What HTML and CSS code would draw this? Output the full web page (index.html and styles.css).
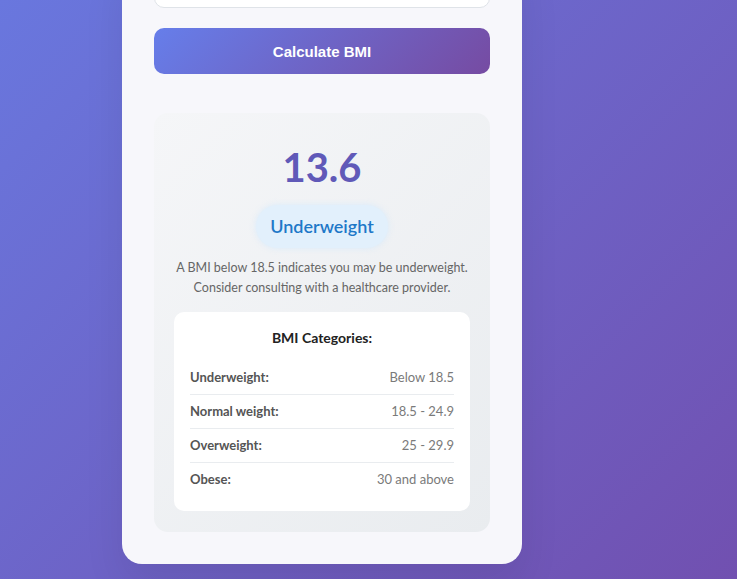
FILE: index.html
```html
<!DOCTYPE html>
<html lang="en">
<head>
<meta charset="utf-8">
<title>BMI Calculator</title>
<link rel="stylesheet" href="styles.css">
</head>
<body>
<main class="page">
  <section class="card">
    <div class="field">
      <input class="field-input" type="number" aria-label="Height (cm)">
    </div>
    <button class="calc-btn" type="button">Calculate BMI</button>

    <div class="result">
      <div class="bmi-value">13.6</div>
      <div class="bmi-badge">Underweight</div>
      <p class="bmi-note">A BMI below 18.5 indicates you may be underweight.<br>Consider consulting with a healthcare provider.</p>

      <div class="categories">
        <h4 class="categories-title">BMI Categories:</h4>
        <div class="cat-row"><span class="cat-name">Underweight:</span><span class="cat-range">Below 18.5</span></div>
        <div class="cat-row"><span class="cat-name">Normal weight:</span><span class="cat-range">18.5 - 24.9</span></div>
        <div class="cat-row"><span class="cat-name">Overweight:</span><span class="cat-range">25 - 29.9</span></div>
        <div class="cat-row"><span class="cat-name">Obese:</span><span class="cat-range">30 and above</span></div>
      </div>
    </div>
  </section>
</main>
</body>
</html>
```

FILE: styles.css
```css
* {
  box-sizing: border-box;
}

html, body {
  margin: 0;
  height: 100%;
}

body {
  background: linear-gradient(135deg, #6977de 0%, #7150b0 100%);
  font-family: Lato, "Noto Sans", sans-serif;
  overflow: hidden;
}

.page {
  padding: 0 0 16px 122px;
}

.card {
  width: 400px;
  background: #f7f7fb;
  border-radius: 0 0 20px 20px;
  padding: 0 32px 32px;
  box-shadow: 0 20px 40px rgba(0, 0, 0, 0.08);
}

.field {
  margin-top: -40px;
  margin-bottom: 20px;
}

.field-input {
  display: block;
  width: 100%;
  height: 48px;
  border: 1px solid #dfe3e8;
  border-radius: 10px;
  background: #ffffff;
}

.calc-btn {
  display: block;
  width: 100%;
  height: 46px;
  padding-top: 2px;
  border: none;
  border-radius: 10px;
  background: linear-gradient(135deg, #667eea 0%, #764ba2 100%);
  color: #ffffff;
  font-family: "Liberation Sans", Arial, sans-serif;
  font-size: 15px;
  font-weight: 700;
  cursor: pointer;
}

.result {
  margin-top: 39px;
  padding: 30px 20px 21px;
  border-radius: 14px;
  background: linear-gradient(135deg, #f5f6f8 0%, #e9ecef 100%);
  text-align: center;
}

.bmi-value {
  font-size: 40px;
  line-height: 48px;
  font-weight: 700;
  color: #6059b8;
  margin-bottom: 14px;
}

.bmi-badge {
  display: inline-block;
  padding: 8px 14px;
  border-radius: 22px;
  background: #e2f0fc;
  color: #1e78c8;
  font-size: 18px;
  line-height: 27px;
  font-weight: 600;
  box-shadow: 0 0 6px rgba(210, 232, 252, 0.8);
}

.bmi-note {
  margin: 10px -10px 14px;
  font-size: 12.5px;
  line-height: 20px;
  color: #666666;
  white-space: nowrap;
}

.categories {
  background: #ffffff;
  border-radius: 10px;
  padding: 15px 16px;
  text-align: left;
}

.categories-title {
  margin: 0 0 12px;
  text-align: center;
  font-size: 14px;
  line-height: 22px;
  font-weight: 700;
  color: #222222;
}

.cat-row {
  display: flex;
  justify-content: space-between;
  padding: 8px 0;
  font-size: 13px;
  line-height: 17px;
  border-bottom: 1px solid #e9ecef;
}

.cat-row:last-child {
  border-bottom: none;
}

.cat-name {
  font-weight: 700;
  color: #555555;
}

.cat-range {
  color: #7a7a7a;
}
```
